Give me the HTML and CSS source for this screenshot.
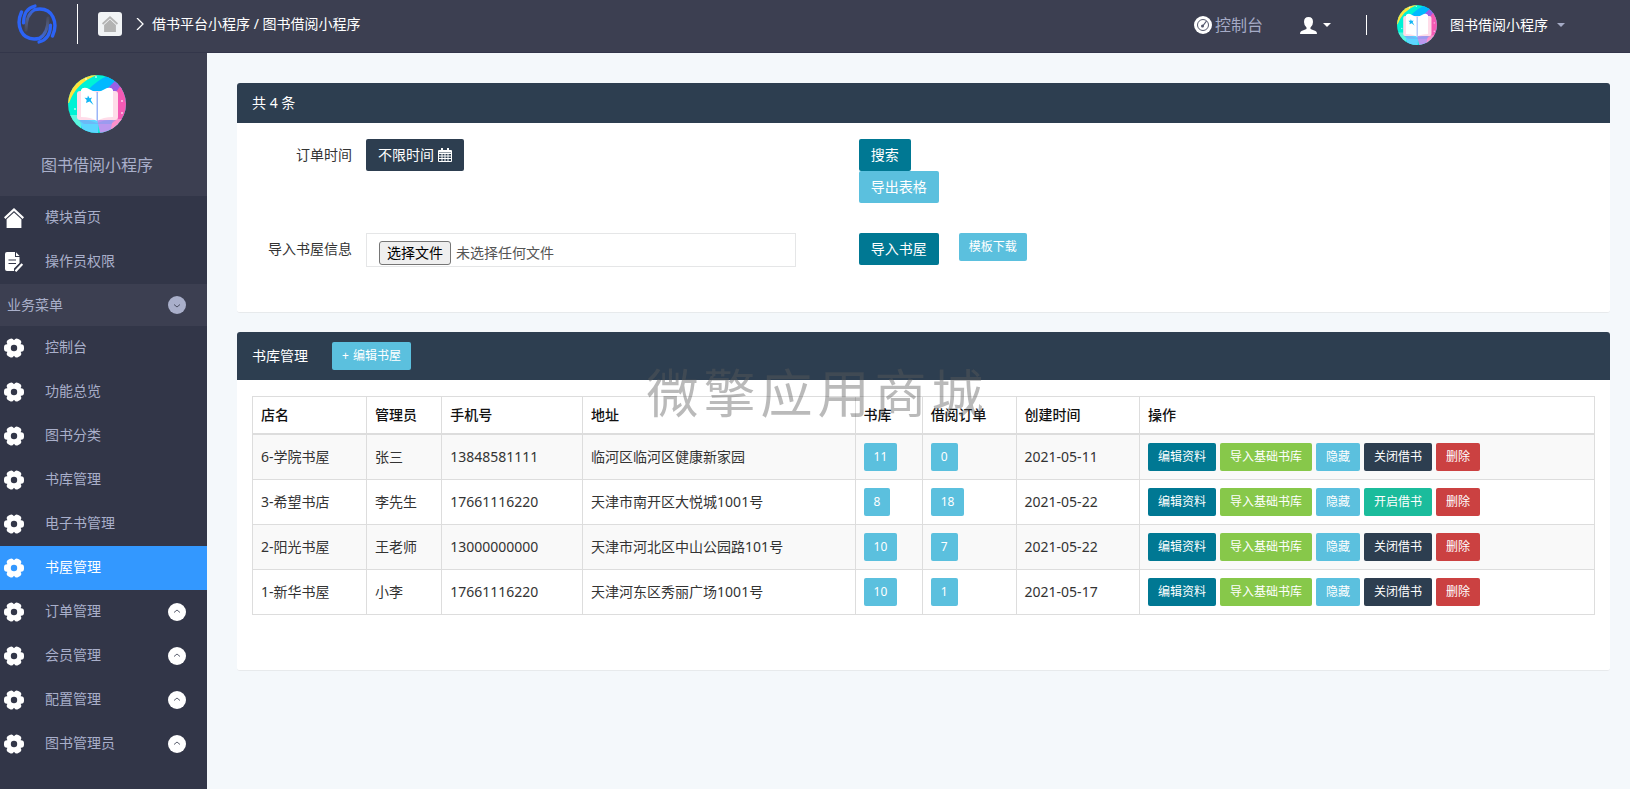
FILE: index.html
```html
<!DOCTYPE html>
<html lang="zh-CN">
<head>
<meta charset="utf-8">
<meta name="viewport" content="width=device-width, initial-scale=1">
<title>图书借阅小程序</title>
<link rel="stylesheet" href="styles.css">
</head>
<body>
<svg class="sprite" aria-hidden="true">
  <defs>
    <mask id="gear-hole"><rect width="20" height="20" fill="#fff"/><circle cx="10" cy="10" r="3.2" fill="#000"/></mask>
    <linearGradient id="fade-right" gradientUnits="userSpaceOnUse" x1="22" y1="34" x2="31" y2="14"><stop offset="0" stop-color="#2c63f5"/><stop offset="1" stop-color="#8088a8" stop-opacity=".15"/></linearGradient>
    <linearGradient id="fade-left" gradientUnits="userSpaceOnUse" x1="18" y1="6" x2="9" y2="26"><stop offset="0" stop-color="#2c63f5"/><stop offset="1" stop-color="#8088a8" stop-opacity=".15"/></linearGradient>
    <clipPath id="disc"><circle cx="29" cy="29" r="29"/></clipPath>
  </defs>
  <symbol id="gear" viewBox="0 0 20 20">
    <g mask="url(#gear-hole)" fill="currentColor">
      <circle cx="10" cy="10" r="7.600"/>
      <rect x="0" y="6.200" width="20" height="7.600" rx="3"/>
      <rect x="0" y="6.200" width="20" height="7.600" rx="3" transform="rotate(60 10 10)"/>
      <rect x="0" y="6.200" width="20" height="7.600" rx="3" transform="rotate(120 10 10)"/>
    </g>
  </symbol>
  <symbol id="house" viewBox="0 0 20 20">
    <path d="M10 0 20 9.2 18.6 11 10 3 1.4 11 0 9.2Z" fill="currentColor"/>
    <path d="M10 4.4 17.4 11.2V20H2.6V11.2Z" fill="currentColor"/>
  </symbol>
  <symbol id="note" viewBox="0 0 20 20">
    <path d="M3 0H11V5H15.5V11L10 16.500V19H3Q1 19 1 17V2Q1 0 3 0Z" fill="currentColor"/>
    <path d="M12 .3 15.6 4H12Z" fill="currentColor"/>
    <path d="M4.500 8H12M4.500 11.500H12" stroke="#33364a" stroke-width="1.200"/>
    <path d="M18.300 12 11.500 19.300" stroke="currentColor" stroke-width="2.200"/>
    <path d="M16.500 11 10 18" stroke="#33364a"/>
  </symbol>
  <symbol id="avatar" viewBox="0 0 58 58">
    <g clip-path="url(#disc)">
      <rect width="58" height="58" fill="#00f2d5"/>
      <path d="M0 0H29Q8 8 1 28H0Z" fill="#ffe23c"/>
      <path d="M19 16Q30 4 42 0L52 7 40 18Z" fill="#00b9ff"/>
      <path d="M38 15 48 5 56 12 47 22Z" fill="#9a5fe6"/>
      <path d="M46 20 53 10H58V46H46Z" fill="#f45ab4"/>
      <path d="M0 40H15L12 58H0Z" fill="#5cf7df"/>
      <path d="M12 44H31L30 58H16Q12 50 12 44Z" fill="#5dd5ff"/>
      <path d="M29 44H46Q46 50 43 58H32Z" fill="#bb98ee"/>
      <path d="M45 44H58V58H42Z" fill="#fb91cc"/>
      <path d="M10 45Q20 44 29 48Q38 44 48 45L43 49H16Z" fill="#7b9df0" opacity=".5"/>
      <rect x="9" y="16" width="41" height="29" rx="3" fill="#ffdce9"/>
      <path d="M13 15Q14 12 19 13L29 18V46Q23 42 13 42Z" fill="#fff"/>
      <path d="M45 15Q44 12 39 13L29 18V46Q35 42 45 42Z" fill="#fff"/>
      <path d="M28.500 17H30V46H28.500Z" fill="#9bb5f8"/>
      <path d="M20 20.500 21.500 23.200 24 22.500 22.700 25 25.500 30 21.500 26.500 18 28 18.700 25 16.500 22.800 19.300 23Z" fill="#11b6f5"/>
      <g fill="#fff" opacity=".7"><circle cx="28" cy="2" r="1"/><circle cx="54" cy="26" r="1"/><circle cx="54" cy="38" r="1"/><circle cx="7" cy="34" r="1"/><circle cx="18" cy="4" r="1"/></g>
    </g>
  </symbol>
  <symbol id="chevron-up" viewBox="0 0 18 18">
    <circle cx="9" cy="9" r="9" fill="currentColor"/>
    <path d="M6 9.500 9 7 12 9.500" fill="none" stroke="#5c6070"/>
  </symbol>
  <symbol id="chevron-down" viewBox="0 0 18 18">
    <circle cx="9" cy="9" r="9" fill="currentColor"/>
    <path d="M6 8.500 9 11 12 8.500" fill="none" stroke="#4c5063"/>
  </symbol>
</svg>

<header class="topbar">
  <a class="logo" href="#" aria-label="平台首页">
    <svg width="40" height="40" viewBox="0 0 40 40" fill="none" stroke-linecap="round">
      <path d="M22 34.500Q31 30 31 14" stroke="url(#fade-right)" stroke-width="3"/>
      <path d="M18 5.500Q9 10 9 26" stroke="url(#fade-left)" stroke-width="3"/>
      <path d="M4.500 8C-1 20 3 38 22 34.500" stroke="#2c63f5" stroke-width="3.400"/>
      <path d="M35.500 32C41 20 37 2 18 5.500" stroke="#2c63f5" stroke-width="3.400"/>
      <path d="M18 2C10 4 6.500 10 6.500 19" stroke="#2c63f5" stroke-width="3.200"/>
      <path d="M22 38C30 36 33.500 30 33.500 21" stroke="#2c63f5" stroke-width="3.200"/>
    </svg>
  </a>
  <span class="rule rule-tall"></span>
  <nav class="crumbs">
    <a class="home-tile" href="#" aria-label="首页"><svg width="16" height="16"><use href="#house"/></svg></a>
    <svg class="crumb-arrow" width="8" height="12" viewBox="0 0 8 12"><path d="M1 0 7 6 1 12" fill="none" stroke="currentColor" stroke-width="1.300"/></svg>
    <span>借书平台小程序 / 图书借阅小程序</span>
  </nav>
  <div class="tools">
    <a class="console-link" href="#">
      <svg width="18" height="18" viewBox="0 0 18 18"><circle cx="9" cy="9" r="9" fill="#fff"/><circle cx="9" cy="9" r="5.500" fill="none" stroke="#55596d"/><path d="M8 11 12.500 5" stroke="#55596d" stroke-width="1.200"/><circle cx="8.500" cy="10" r="1.500" fill="#55596d"/></svg>
      控制台
    </a>
    <button class="user-button" type="button" aria-label="用户">
      <svg width="17" height="17" viewBox="0 0 17 17"><path d="M8.500 0Q13 0 13 5Q13 8.500 10.500 10.500V12L15.500 14Q17 14.700 17 17H0Q0 14.700 1.500 14L6.500 12V10.500Q4 8.500 4 5Q4 0 8.500 0Z" fill="#fff"/></svg>
      <i class="caret"></i>
    </button>
    <span class="rule"></span>
    <button class="account" type="button">
      <svg width="40" height="40"><use href="#avatar"/></svg>
      <span>图书借阅小程序</span>
      <i class="caret caret-muted"></i>
    </button>
  </div>
</header>

<div class="shell">
  <aside class="sidebar">
    <div class="profile">
      <svg width="58" height="58"><use href="#avatar"/></svg>
      <span>图书借阅小程序</span>
    </div>
    <nav>
      <a class="item" href="#"><svg width="20" height="20"><use href="#house"/></svg><span>模块首页</span></a>
      <a class="item" href="#"><svg width="20" height="20"><use href="#note"/></svg><span>操作员权限</span></a>
      <button class="section" type="button">业务菜单<svg width="18" height="18"><use href="#chevron-down"/></svg></button>
      <a class="item" href="#"><svg width="20" height="20"><use href="#gear"/></svg><span>控制台</span></a>
      <a class="item" href="#"><svg width="20" height="20"><use href="#gear"/></svg><span>功能总览</span></a>
      <a class="item" href="#"><svg width="20" height="20"><use href="#gear"/></svg><span>图书分类</span></a>
      <a class="item" href="#"><svg width="20" height="20"><use href="#gear"/></svg><span>书库管理</span></a>
      <a class="item" href="#"><svg width="20" height="20"><use href="#gear"/></svg><span>电子书管理</span></a>
      <a class="item active" href="#" aria-current="page"><svg width="20" height="20"><use href="#gear"/></svg><span>书屋管理</span></a>
      <a class="item" href="#"><svg width="20" height="20"><use href="#gear"/></svg><span>订单管理</span><svg class="toggle" width="18" height="18"><use href="#chevron-up"/></svg></a>
      <a class="item" href="#"><svg width="20" height="20"><use href="#gear"/></svg><span>会员管理</span><svg class="toggle" width="18" height="18"><use href="#chevron-up"/></svg></a>
      <a class="item" href="#"><svg width="20" height="20"><use href="#gear"/></svg><span>配置管理</span><svg class="toggle" width="18" height="18"><use href="#chevron-up"/></svg></a>
      <a class="item" href="#"><svg width="20" height="20"><use href="#gear"/></svg><span>图书管理员</span><svg class="toggle" width="18" height="18"><use href="#chevron-up"/></svg></a>
    </nav>
  </aside>

  <main class="content">
    <section class="panel">
      <h2 class="panel-head">共 4 条</h2>
      <form class="filters">
        <label for="range">订单时间</label>
        <div>
          <button class="btn dark" id="range" type="button">不限时间
            <svg width="14" height="14" viewBox="0 0 14 14" fill="none" stroke="#fff"><path d="M.5 2.500H13.500V13.500H.5ZM.5 5.500H13.500M.5 8H13.500M.5 10.500H13.500M4 5V13M7 5V13M10 5V13"/><path d="M1 3.500H13" stroke-width="2"/><path d="M4 0V4M10 0V4" stroke-width="2"/></svg>
          </button>
        </div>
        <div class="actions stacked">
          <button class="btn primary" type="submit">搜索</button>
          <button class="btn info" type="button">导出表格</button>
        </div>
        <label for="file">导入书屋信息</label>
        <div class="file-box">
          <span class="file-button">选择文件</span>
          <span>未选择任何文件</span>
          <input id="file" type="file">
        </div>
        <div class="actions">
          <button class="btn primary" type="button">导入书屋</button>
          <a class="btn small info" href="#">模板下载</a>
        </div>
      </form>
    </section>

    <section class="panel">
      <div class="panel-head tall">
        <h2>书库管理</h2>
        <a class="btn small info" href="#"><span>+</span>编辑书屋</a>
      </div>
      <div class="table-wrap">
        <table>
          <colgroup><col class="c-name"><col class="c-admin"><col class="c-phone"><col class="c-address"><col class="c-books"><col class="c-orders"><col class="c-date"><col></colgroup>
          <thead><tr><th>店名</th><th>管理员</th><th>手机号</th><th>地址</th><th>书库</th><th>借阅订单</th><th>创建时间</th><th>操作</th></tr></thead>
          <tbody>
            <tr><td>6-学院书屋</td><td>张三</td><td>13848581111</td><td>临河区临河区健康新家园</td><td><a class="btn small info" href="#">11</a></td><td><a class="btn small info" href="#">0</a></td><td>2021-05-11</td>
              <td><div class="ops"><a class="btn small primary" href="#">编辑资料</a><a class="btn small green" href="#">导入基础书库</a><button class="btn small info" type="button">隐藏</button><button class="btn small dark" type="button">关闭借书</button><button class="btn small danger" type="button">删除</button></div></td></tr>
            <tr><td>3-希望书店</td><td>李先生</td><td>17661116220</td><td>天津市南开区大悦城1001号</td><td><a class="btn small info" href="#">8</a></td><td><a class="btn small info" href="#">18</a></td><td>2021-05-22</td>
              <td><div class="ops"><a class="btn small primary" href="#">编辑资料</a><a class="btn small green" href="#">导入基础书库</a><button class="btn small info" type="button">隐藏</button><button class="btn small teal" type="button">开启借书</button><button class="btn small danger" type="button">删除</button></div></td></tr>
            <tr><td>2-阳光书屋</td><td>王老师</td><td>13000000000</td><td>天津市河北区中山公园路101号</td><td><a class="btn small info" href="#">10</a></td><td><a class="btn small info" href="#">7</a></td><td>2021-05-22</td>
              <td><div class="ops"><a class="btn small primary" href="#">编辑资料</a><a class="btn small green" href="#">导入基础书库</a><button class="btn small info" type="button">隐藏</button><button class="btn small dark" type="button">关闭借书</button><button class="btn small danger" type="button">删除</button></div></td></tr>
            <tr><td>1-新华书屋</td><td>小李</td><td>17661116220</td><td>天津河东区秀丽广场1001号</td><td><a class="btn small info" href="#">10</a></td><td><a class="btn small info" href="#">1</a></td><td>2021-05-17</td>
              <td><div class="ops"><a class="btn small primary" href="#">编辑资料</a><a class="btn small green" href="#">导入基础书库</a><button class="btn small info" type="button">隐藏</button><button class="btn small dark" type="button">关闭借书</button><button class="btn small danger" type="button">删除</button></div></td></tr>
          </tbody>
        </table>
      </div>
    </section>
  </main>
</div>
<div class="watermark" aria-hidden="true">微擎应用商城</div>
</body>
</html>
```
FILE: styles.css
```css
* {
  box-sizing: border-box;
}

body {
  margin: 0;
  min-height: 100vh;
  display: flex;
  flex-direction: column;
  background: #f4f8fb;
  color: #333;
  font: 14px/20px "Noto Sans", "Noto Sans CJK SC", sans-serif;
}

a {
  color: inherit;
  text-decoration: none;
}

button {
  border: 0;
  background: none;
  color: inherit;
  font: inherit;
  cursor: pointer;
}

svg {
  display: block;
  flex: none;
}

.sprite {
  position: absolute;
  width: 0;
  height: 0;
}

/* Top bar */

.topbar {
  display: flex;
  align-items: center;
  height: 53px;
  padding: 0 65px 4px 17px;
  border-bottom: 1px solid #33364a;
  background: #3c3f51;
  color: #fff;
}

.rule {
  width: 1px;
  height: 20px;
  background: #fff;
}

.rule-tall {
  height: 40px;
  margin: 0 20px;
}

.crumbs {
  display: flex;
  align-items: center;
}

.home-tile {
  display: grid;
  place-items: center;
  width: 24px;
  height: 24px;
  margin-right: 14px;
  border-radius: 3px;
  background: #f1f3f5;
  color: #b3b3b3;
}

.crumb-arrow {
  margin-right: 8px;
}

.tools {
  display: flex;
  align-items: center;
  margin-left: auto;
  padding-top: 2px;
}

.console-link {
  display: flex;
  align-items: center;
  gap: 3px;
  color: #a5abc6;
  font-size: 16px;
}

.user-button {
  display: flex;
  align-items: center;
  gap: 6px;
  margin: 0 35px 0 37px;
  padding: 0;
}

.caret {
  border: 4px solid transparent;
  border-top-color: #fff;
  border-bottom: 0;
}

.caret-muted {
  border-top-color: #a5abc6;
}

.account {
  display: flex;
  align-items: center;
  margin-left: 30px;
  padding: 0;
}

.account span {
  margin: 0 9px 0 13px;
}

/* Sidebar */

.shell {
  display: flex;
  flex: 1;
}

.sidebar {
  flex: none;
  width: 207px;
  background: #323648;
  color: #a9afca;
}

.profile {
  display: flex;
  flex-direction: column;
  align-items: center;
  gap: 22px;
  padding: 22px 13px 21px 0;
  background: #3c3f51;
  font-size: 16px;
}

.item {
  display: flex;
  align-items: center;
  gap: 21px;
  height: 44px;
  padding: 0 21px 0 4px;
}

.item span {
  padding-bottom: 2px;
}

.item svg {
  color: #fff;
}

.item .toggle {
  margin-left: auto;
}

.item.active {
  background: #3398ff;
  color: #fff;
}

.section {
  display: flex;
  align-items: center;
  justify-content: space-between;
  width: 100%;
  height: 42px;
  padding: 0 21px 0 7px;
  background: #3c3f51;
}

/* Panels */

.content {
  flex: 1;
  min-width: 0;
  padding: 30px 20px 30px 30px;
}

.panel {
  margin-bottom: 19px;
  border-bottom: 1px solid #e7eaec;
  border-radius: 3px;
  background: #fff;
}

.panel-head {
  margin: 0;
  padding: 10px 15px;
  border-radius: 3px 3px 0 0;
  background: #2d3e50;
  color: #fff;
  font-size: 14px;
  font-weight: 400;
}

.panel-head h2 {
  margin: 0;
  font: inherit;
}

.tall {
  display: flex;
  align-items: center;
  gap: 24px;
}

.btn {
  display: inline-flex;
  align-items: center;
  gap: 4px;
  height: 32px;
  padding: 0 12px;
  border-radius: 2px;
  color: #fff;
  white-space: nowrap;
}

.small {
  height: 28px;
  padding: 0 10px;
  font-size: 12px;
}

.primary { background: #007893; }
.info { background: #5bc0de; }
.dark { background: #2d3e50; }
.green { background: #87c84a; }
.teal { background: #1bbc9c; }
.danger { background: #cb4141; }

.filters {
  display: grid;
  grid-template-columns: 100px 32% 1fr;
  column-gap: 14px;
  row-gap: 30px;
  padding: 16px 15px 45px;
}

.filters label {
  padding-top: 6px;
  text-align: right;
}

.actions {
  display: flex;
  align-items: flex-start;
  gap: 20px;
  padding-left: 49px;
}

.stacked {
  flex-direction: column;
  gap: 0;
}

.file-box {
  position: relative;
  display: flex;
  align-items: flex-end;
  gap: 5px;
  height: 34px;
  padding: 0 12px 1px;
  border: 1px solid #e5e6e7;
  color: #555;
}

.file-box input {
  position: absolute;
  inset: 0;
  width: 100%;
  opacity: 0;
}

.file-box span {
  padding: 2px 0;
}

.file-box .file-button {
  padding: 1px 7px;
  border: 1px solid #767676;
  border-radius: 3px;
  background: #efefef;
  color: #000;
}

/* Table */

.table-wrap {
  padding: 16px 15px 55px;
}

table {
  width: 100%;
  border-collapse: collapse;
}

th,
td {
  padding: 8px;
  border: 1px solid #ddd;
  text-align: left;
}

th {
  border-bottom-width: 2px;
  color: #111;
  font-weight: 500;
}

td {
  height: 45px;
  padding: 0 8px;
}

tbody tr:nth-child(odd) {
  background: #f9f9f9;
}

td .btn {
  vertical-align: middle;
}

.c-name { width: 8.5%; }
.c-admin { width: 5.6%; }
.c-phone { width: 10.5%; }
.c-address { width: 20.3%; }
.c-books { width: 5%; }
.c-orders { width: 7%; }
.c-date { width: 9.2%; }

.ops {
  display: flex;
  gap: 4px;
}

.watermark {
  position: fixed;
  top: 50%;
  left: 50%;
  transform: translate(-50%, -50%);
  padding: 0 0 4px 5px;
  color: rgba(90, 90, 90, 0.42);
  font-size: 52px;
  font-weight: 400;
  line-height: 60px;
  letter-spacing: 5px;
  white-space: nowrap;
  pointer-events: none;
}
```
